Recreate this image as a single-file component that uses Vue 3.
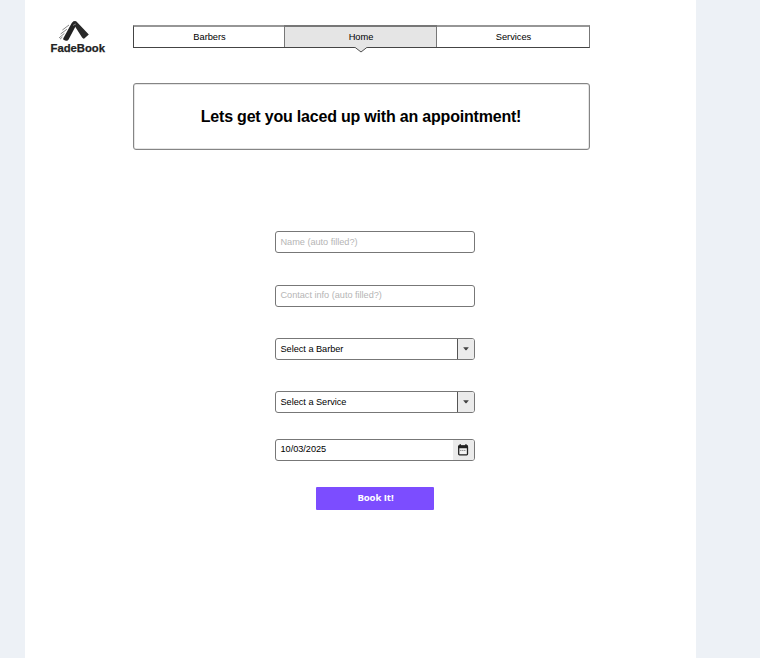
<script setup>
const tabs = [
  { label: 'Barbers', active: false },
  { label: 'Home', active: true },
  { label: 'Services', active: false },
]
</script>

<template>
  <div class="page">
    <main class="sheet">
      <header class="top">
        <div class="logo">
          <svg class="mark" width="34" height="22" viewBox="0 0 34 22">
            <path d="M6.2 18.4 L14.6 3.2 Q16.4 .2 18.4 2.4 L19 5.4 L11.6 19.4 Q10.6 21.4 8.2 20.6 Q5.6 19.8 6.2 18.4 Z" fill="#222" />
            <path d="M16 1.8 Q18.2 0 20.4 2.4 L31.8 14.4 L27.3 18.6 Q26.2 19.2 25.1 17.6 L17.4 5.6 Z" fill="#292929" />
            <path d="M16 5.4 L18.8 4" stroke="#999" stroke-width=".8" />
            <path d="M12 5 L5.4 10 M9.8 9.3 L3.6 14 M7.4 13.4 L2 18 M5.4 17 L3 19.2" stroke="#666" stroke-width=".8" fill="none" />
          </svg>
          <svg class="word" width="60" height="15">
            <text x="1.5" y="10.2" textLength="54.5" lengthAdjust="spacingAndGlyphs">FadeBook</text>
          </svg>
        </div>
        <nav class="tabs">
          <a v-for="t in tabs" :key="t.label" class="tab" :class="{ active: t.active }">
            <span>{{ t.label }}</span>
            <svg v-if="t.active" class="pointer" width="14" height="6" viewBox="0 0 14 6">
              <path d="M0 0 H14 V.5 L12.5 .8 L7 5 L1.5 .8 L0 .5 Z" fill="#e5e5e5" />
              <path d="M0 .5 H1.2 L7 5 L12.8 .5 H14" fill="none" stroke="#505050" />
            </svg>
          </a>
        </nav>
      </header>

      <h1 class="title"><span>Lets get you laced up with an appointment!</span></h1>

      <form class="form">
        <div class="field hint first"><span>Name (auto filled?)</span></div>
        <div class="field hint second"><span>Contact info (auto filled?)</span></div>
        <div class="field barber">
          <span>Select a Barber</span>
          <i class="drop"><svg width="6" height="4" viewBox="0 0 6 4"><path d="M.2 .3 H5.8 L3.7 3 Q3 3.6 2.3 3 Z" fill="#444" /></svg></i>
        </div>
        <div class="field service">
          <span>Select a Service</span>
          <i class="drop"><svg width="6" height="4" viewBox="0 0 6 4"><path d="M.2 .3 H5.8 L3.7 3 Q3 3.6 2.3 3 Z" fill="#444" /></svg></i>
        </div>
        <div class="field date">
          <span>10/03/2025</span>
          <i class="cal">
            <svg width="12" height="12" viewBox="0 0 12 12">
              <rect x="1.7" y="2" width="8.8" height="8.8" rx=".8" fill="#f3f3f3" stroke="#222" stroke-width="1.3" />
              <path d="M1.2 1.5 H11 V4.2 H1.2 Z M2.5 .3 H4 V2 H2.5 Z M8.2 .3 H9.7 V2 H8.2 Z" fill="#222" />
              <path d="M3.2 6.4 H9" stroke="#777" stroke-width="1" stroke-dasharray="1.2 .8" />
            </svg>
          </i>
        </div>
        <button class="book" type="button">Book It!</button>
      </form>
    </main>
  </div>
</template>

<style>
body {
  margin: 0;
  background: #edf1f6;
}
</style>

<style scoped>
.page {
  box-sizing: border-box;
  height: 658px;
  padding: 0 64px 0 25px;
  background: #edf1f6;
  overflow: hidden;
  font-family: "Liberation Sans", Arial, sans-serif;
  color: #000;
}
.sheet {
  box-sizing: border-box;
  height: 658px;
  background: #fff;
}
.top {
  display: flex;
  height: 83px;
}
.logo {
  box-sizing: border-box;
  width: 108px;
  padding: 20px 0 0 24px;
}
.logo svg {
  display: block;
}
.mark {
  margin-left: 8px;
}
.word text {
  font: bold 11.8px "Liberation Sans", Arial, sans-serif;
  fill: #222;
  stroke: #222;
  stroke-width: 0.25px;
}
.tabs {
  box-sizing: border-box;
  display: grid;
  grid-template-columns: 150px 153px 152px;
  width: 457px;
  height: 23px;
  margin-top: 25px;
  border: 1px solid #444;
  border-top: 2px solid #969696;
  border-right-color: #777;
}
.tab {
  position: relative;
  display: flex;
  justify-content: center;
  padding-left: 1px;
  font-size: 9.3px;
  letter-spacing: -0.03px;
  line-height: 20px;
}
.active {
  background: #e5e5e5;
  border-left: 1px solid #777;
  border-right: 1px solid #777;
  box-shadow: 0 -2px #777;
}
.pointer {
  position: absolute;
  left: 69px;
  top: 20px;
}
.title {
  box-sizing: border-box;
  display: flex;
  justify-content: center;
  width: 457px;
  height: 67px;
  margin: 0 0 0 108px;
  padding-right: 1px;
  border: 1px solid #858585;
  border-radius: 3px;
  box-shadow: inset 0 0 0 0.5px #ccc;
  font-size: 16px;
  letter-spacing: -0.2px;
  line-height: 65px;
  white-space: nowrap;
}
.form {
  display: flex;
  flex-direction: column;
  width: 200px;
  margin: 81px 0 0 250px;
}
.field {
  box-sizing: border-box;
  display: flex;
  justify-content: space-between;
  width: 200px;
  height: 22px;
  padding-left: 4.5px;
  border: 1px solid #777;
  border-radius: 3px;
  font-size: 9.2px;
  letter-spacing: -0.03px;
  line-height: 20px;
  overflow: hidden;
}
.hint {
  color: #b5b5b5;
}
.second {
  margin-top: 32px;
  line-height: 18px;
}
.barber {
  margin-top: 31px;
}
.service {
  margin-top: 31px;
}
.date {
  margin-top: 26px;
  line-height: 18px;
}
.drop,
.cal {
  display: flex;
  align-items: center;
  justify-content: center;
  background: #ebebeb;
}
.drop {
  width: 16px;
  border-left: 1px solid #555;
}
.cal {
  box-sizing: border-box;
  width: 21px;
  padding-right: 2px;
}
.book {
  width: 118px;
  height: 23px;
  margin: 26px 0 0 41px;
  padding: 0 0 2px 1px;
  border: 0;
  border-radius: 1px;
  background: #7c4dff;
  color: #fff;
  font: bold 9.6px/21px "Open Sans", "Noto Sans", sans-serif;
  letter-spacing: -0.08px;
}
</style>
